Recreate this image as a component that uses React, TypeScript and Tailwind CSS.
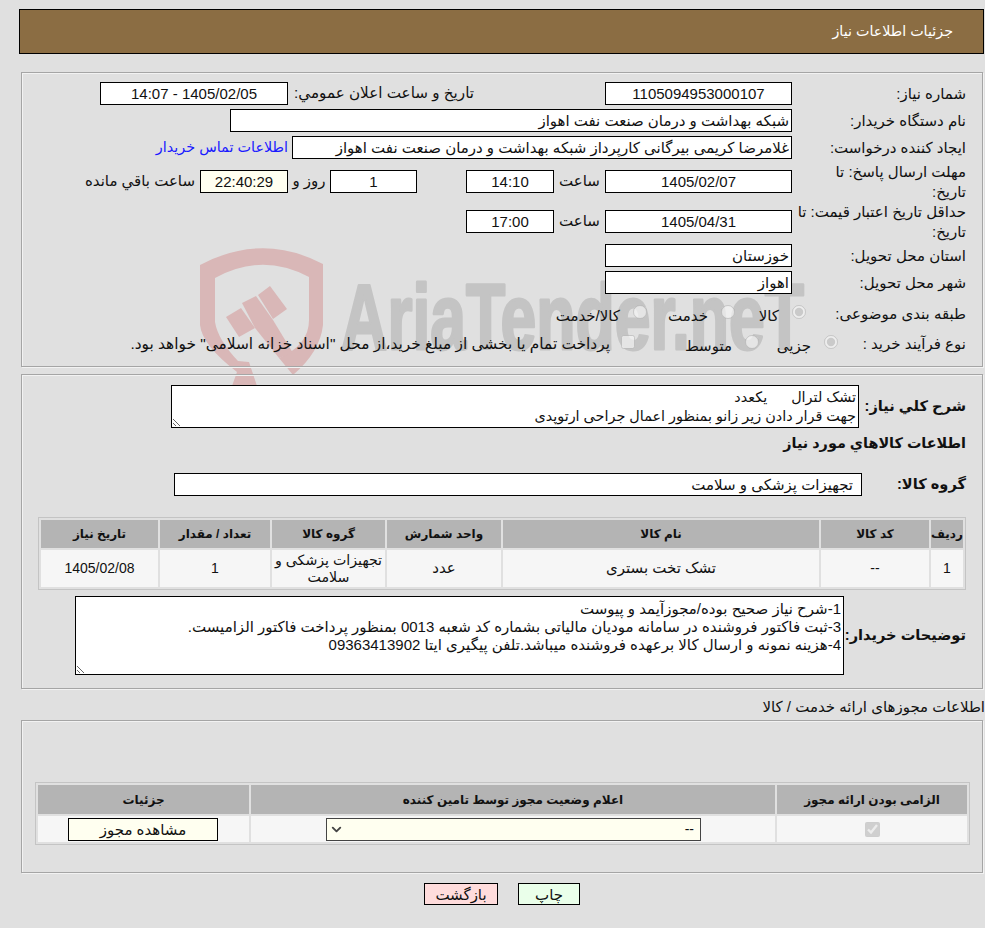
import React from 'react'
import { ChevronDown } from 'lucide-react'

const field = 'h-[23px] border border-black bg-white px-[2px] text-[#111] outline-none rounded-none'
const panel = 'ml-[21px] mr-[2px] border border-[#a5a5a5] shadow-[inset_1px_1px_0_#f2f2f2,1px_1px_0_#f2f2f2]'

function Label({ children, w }: { children: React.ReactNode; w: string }) {
  return <div className={`${w} shrink-0 leading-[20px] text-[#111]`}>{children}</div>
}

function Watermark() {
  return (
    <svg className="absolute left-0 top-0 z-0 pointer-events-none" width="985" height="928" viewBox="0 0 985 928">
      <path
        fill="#d9b7b7"
        d="M200 265 Q262 232 323 264 L323 325 Q320 352 293 375 L279 358 Q309 345 309 320 L309 277 Q262 252 215 278 L215 322 Q218 340 238 361 L249 362 L257 386 L232 386 L237 372 Q202 345 200 325 Z"
      />
      <path fill="#d9b7b7" d="M226 317 L241 308 L255 328 L239 337 Z" />
      <path fill="#d9b7b7" d="M242 303 L256 296 L273 320 L293 353 L279 358 L255 328 Z" />
      <path fill="#d9b7b7" d="M258 295 L270 286 L287 309 L273 319 Z" />
      <text
        x="341"
        y="349"
        fontSize="92"
        fontWeight="700"
        fontFamily="'Liberation Sans', sans-serif"
        fill="#c4c4c4"
        stroke="#c4c4c4"
        strokeWidth="3"
        strokeLinejoin="round"
        textLength="463"
        lengthAdjust="spacingAndGlyphs"
        direction="ltr"
      >
        AriaTender.neT
      </text>
    </svg>
  )
}

export default function App() {
  return (
    <div dir="rtl" className="relative h-[928px] overflow-hidden bg-[#e0e0e0] font-['Liberation_Sans','DejaVu_Sans',sans-serif] text-[15px] text-[#111]">
      <Watermark />
      <div className="relative z-10">
        <div className="ml-[19px] mr-[1px] mt-[9px] flex h-[45px] items-center border border-black bg-[#8b6d43] pr-[30px] text-[14.3px] text-white">
          جزئیات اطلاعات نیاز
        </div>

        <div className={`${panel} mt-[18px] h-[295px] pr-[16px] pt-[9px]`}>
          <div className="flex h-[23px] items-center">
            <Label w="w-[174px]">شماره نیاز:</Label>
            <input readOnly value="1105094953000107" className={`${field} w-[187px] text-center`} />
            <div className="mr-[131px] w-[181px] shrink-0 whitespace-nowrap text-[15.2px]">تاریخ و ساعت اعلان عمومي:</div>
            <input readOnly value="1405/02/05 - 14:07" className={`${field} mr-[5px] w-[188px] text-center`} />
          </div>
          <div className="mt-[4px] flex h-[23px] items-center">
            <Label w="w-[174px]">نام دستگاه خریدار:</Label>
            <input readOnly value="شبکه بهداشت و درمان صنعت نفت اهواز" className={`${field} w-[562px]`} />
          </div>
          <div className="mt-[4px] flex h-[23px] items-center">
            <Label w="w-[174px]">ایجاد کننده درخواست:</Label>
            <input readOnly value="غلامرضا کریمی بیرگانی کارپرداز شبکه بهداشت و درمان صنعت نفت اهواز" className={`${field} w-[500px]`} />
            <a className="mr-[4px] text-[14.4px] text-[#1a1aff]">اطلاعات تماس خریدار</a>
          </div>
          <div className="mt-[6px] flex h-[33px] items-center">
            <Label w="w-[174px]">
              مهلت ارسال پاسخ: تا
              <br />
              تاریخ:
            </Label>
            <input readOnly value="1405/02/07" className={`${field} w-[187px] text-center`} />
            <div className="w-[51px] shrink-0 text-center">ساعت</div>
            <input readOnly value="14:10" className={`${field} w-[88px] text-center`} />
            <input readOnly value="1" className={`${field} mr-[49px] w-[87px] text-center`} />
            <div className="w-[42px] shrink-0 text-center">روز و</div>
            <input readOnly value="22:40:29" className={`${field} w-[88px] !bg-[#fffff0] text-center`} />
            <div className="mr-[5px]">ساعت باقي مانده</div>
          </div>
          <div className="mt-[7px] flex h-[33px] items-center">
            <Label w="w-[174px]">
              حداقل تاریخ اعتبار قیمت: تا
              <br />
              تاریخ:
            </Label>
            <input readOnly value="1405/04/31" className={`${field} w-[187px] text-center`} />
            <div className="w-[51px] shrink-0 text-center">ساعت</div>
            <input readOnly value="17:00" className={`${field} w-[88px] text-center`} />
          </div>
          <div className="mt-[6px] flex h-[23px] items-center">
            <Label w="w-[174px]">استان محل تحویل:</Label>
            <input readOnly value="خوزستان" className={`${field} w-[187px]`} />
          </div>
          <div className="mt-[4px] flex h-[23px] items-center">
            <Label w="w-[174px]">شهر محل تحویل:</Label>
            <input readOnly value="اهواز" className={`${field} w-[187px]`} />
          </div>
          <div className="mt-[9px] flex h-[22px] items-center">
            <Label w="w-[160px]">طبقه بندی موضوعی:</Label>
            <div className="flex w-[71px] shrink-0 items-center gap-[13px]">
              <input type="radio" disabled checked readOnly className="m-0 mb-[4px] h-[14px] w-[14px]" />
              <span className="mt-[4px]">کالا</span>
            </div>
            <div className="flex w-[88px] shrink-0 items-center gap-[13px]">
              <input type="radio" disabled className="m-0 mb-[4px] h-[14px] w-[14px]" />
              <span className="mt-[4px]">خدمت</span>
            </div>
            <div className="flex items-center gap-[13px]">
              <input type="radio" disabled className="m-0 mb-[4px] h-[14px] w-[14px]" />
              <span className="mt-[4px]">کالا/خدمت</span>
            </div>
          </div>
          <div className="mt-[8px] flex h-[22px] items-center">
            <Label w="w-[128px]">نوع فرآیند خرید :</Label>
            <div className="flex w-[79px] shrink-0 items-center gap-[13px]">
              <input type="radio" disabled checked readOnly className="m-0 mb-[4px] h-[14px] w-[14px]" />
              <span className="mt-[4px]">جزیی</span>
            </div>
            <div className="flex w-[124px] shrink-0 items-center gap-[13px]">
              <input type="radio" disabled className="m-0 mb-[4px] h-[14px] w-[14px]" />
              <span className="mt-[4px]">متوسط</span>
            </div>
            <div className="flex items-center gap-[11px]">
              <input type="checkbox" disabled className="m-0 mb-[4px] h-[14px] w-[14px]" />
              <span className="text-[15.4px]">پرداخت تمام یا بخشی از مبلغ خرید،از محل "اسناد خزانه اسلامی" خواهد بود.</span>
            </div>
          </div>
        </div>

        <div className={`${panel} mt-[7px] h-[315px] pr-[16px] pt-[10px]`}>
          <div className="flex h-[43px] items-center">
            <div className="w-[107px] shrink-0 text-[14.6px] font-bold">شرح کلي نیاز:</div>
            <textarea
              readOnly
              className="h-[43px] w-[688px] rounded-none border border-black bg-white px-[2px] pt-[2px] text-[14.4px] leading-[19px] text-[#111] outline-none"
              value={'تشک لترال      یکعدد\nجهت قرار دادن زیر زانو بمنظور اعمال جراحی ارتوپدی'}
            />
          </div>
          <div className="mt-[6px] text-[14.4px] font-bold leading-[18px]">اطلاعات کالاهاي مورد نیاز</div>
          <div className="mt-[21px] flex h-[23px] items-center">
            <div className="w-[104px] shrink-0 text-[14.6px] font-bold">گروه کالا:</div>
            <input readOnly value="تجهیزات پزشکی و سلامت" className={`${field} w-[688px] !pr-[8px]`} />
          </div>
          <table className="mt-[21px] w-[928px] table-fixed border-separate border-spacing-[2px] border border-[#c4c4c4] text-center">
            <colgroup>
              <col className="w-[32px]" />
              <col className="w-[108px]" />
              <col className="w-[316px]" />
              <col className="w-[114px]" />
              <col className="w-[113px]" />
              <col className="w-[110px]" />
              <col className="w-[117px]" />
            </colgroup>
            <thead>
              <tr className="h-[28px] bg-[#b4b4b4] text-[12px] font-bold">
                <th className="p-0">ردیف</th>
                <th className="p-0">کد کالا</th>
                <th className="p-0">نام کالا</th>
                <th className="p-0">واحد شمارش</th>
                <th className="p-0">گروه کالا</th>
                <th className="p-0">تعداد / مقدار</th>
                <th className="p-0">تاریخ نیاز</th>
              </tr>
            </thead>
            <tbody>
              <tr className="h-[37px] bg-[#f6f6f6]">
                <td className="p-0 text-[14px]">1</td>
                <td className="p-0 text-[14px]">--</td>
                <td className="p-0">تشک تخت بستری</td>
                <td className="p-0">عدد</td>
                <td className="p-0 text-[14.2px] leading-[17px]">تجهیزات پزشکی و سلامت</td>
                <td className="p-0 text-[14px]">1</td>
                <td className="p-0 text-[14px]">1405/02/08</td>
              </tr>
            </tbody>
          </table>
          <div className="mt-[6px] flex h-[79px] items-center">
            <div className="w-[122px] shrink-0 text-[14.6px] font-bold">توضیحات خریدار:</div>
            <textarea
              readOnly
              className="h-[79px] w-[769px] rounded-none border border-black bg-white px-[2px] pt-[3px] leading-[18px] text-[#111] outline-none"
              value={
                '1-شرح نیاز صحیح بوده/مجوزآیمد و پیوست\n3-ثبت فاکتور فروشنده در سامانه مودیان مالیاتی بشماره کد شعبه 0013 بمنظور پرداخت فاکتور الزامیست.\n4-هزینه نمونه و ارسال کالا برعهده فروشنده میباشد.تلفن پیگیری ایتا 09363413902'
              }
            />
          </div>
        </div>

        <div className="mt-[9px] leading-[18px]">اطلاعات مجوزهای ارائه خدمت / کالا</div>

        <div className={`${panel} mt-[4px] h-[153px] pr-[12px] pt-[61px]`}>
          <table className="w-[935px] table-fixed border-separate border-spacing-[2px] border border-[#c4c4c4] text-center">
            <colgroup>
              <col className="w-[190px]" />
              <col className="w-[524px]" />
              <col className="w-[211px]" />
            </colgroup>
            <thead>
              <tr className="h-[29px] bg-[#b4b4b4] text-[12px] font-bold">
                <th className="p-0">الزامی بودن ارائه مجوز</th>
                <th className="p-0">اعلام وضعیت مجوز توسط تامین کننده</th>
                <th className="p-0">جزئیات</th>
              </tr>
            </thead>
            <tbody>
              <tr className="h-[26px] bg-[#f6f6f6]">
                <td className="p-0">
                  <input type="checkbox" disabled checked readOnly className="m-0 h-[15px] w-[15px] align-middle" />
                </td>
                <td className="p-0">
                  <div className="relative mr-[74px] h-[23px] w-[375px]">
                    <select className="block h-[23px] w-full appearance-none rounded-none border border-[#444] bg-[#fffff0] pr-[6px] text-[14px] outline-none">
                      <option>--</option>
                    </select>
                    <ChevronDown size={15} strokeWidth={3} className="pointer-events-none absolute left-[3px] top-[4px] text-[#444]" />
                  </div>
                </td>
                <td className="p-0">
                  <button className="mr-[31px] block h-[23px] w-[150px] border border-black bg-[#fffff0] text-[15px]">مشاهده مجوز</button>
                </td>
              </tr>
            </tbody>
          </table>
        </div>

        <div className="mt-[10px] flex justify-center gap-[20px] pl-[19px]">
          <button className="h-[22px] w-[62px] border border-black bg-[#eaffea]">چاپ</button>
          <button className="h-[22px] w-[74px] border border-black bg-[#ffdcdc]">بازگشت</button>
        </div>
      </div>
    </div>
  )
}
